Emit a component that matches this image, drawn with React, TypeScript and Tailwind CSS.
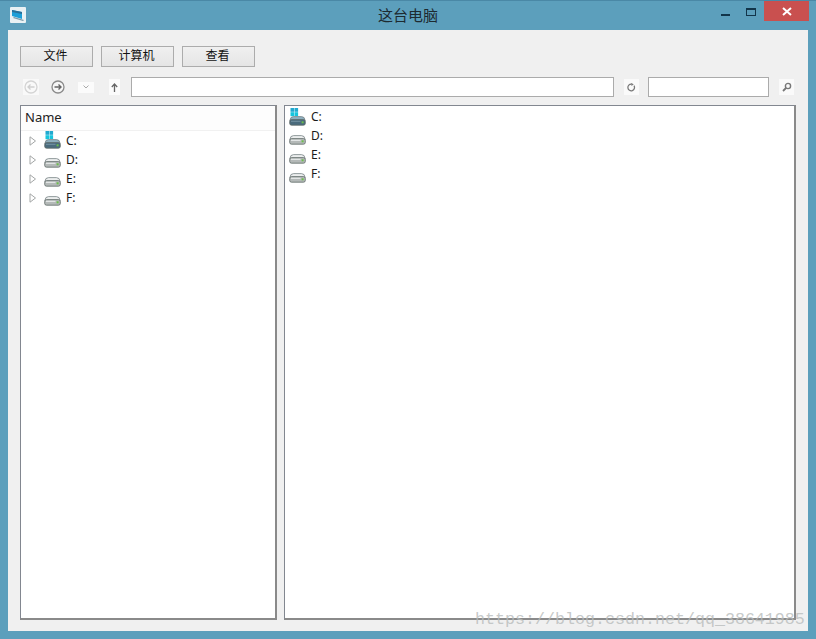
import React from "react";

function Drive({ system = false }: { system?: boolean }) {
  return (
    <svg width="17" height="18" viewBox="0 0 17 18" className="block shrink-0">
      {system && (
        <g>
          <rect x="1.5" y="0" width="3.6" height="3.8" fill="#21a9cf" />
          <rect x="5.5" y="0" width="3.6" height="3.8" fill="#21a9cf" />
          <rect x="1.5" y="4.2" width="3.6" height="4" fill="#16c5dd" />
          <rect x="5.5" y="4.2" width="3.6" height="4" fill="#16c5dd" />
        </g>
      )}
      <path d="M0.9 12.5 Q1.2 8.6 4.5 8.6 H12.5 Q15.8 8.6 16.1 12.5 Z" fill={system ? "#8fb0c0" : "#eceeee"} stroke="#7a8487" strokeWidth="0.8" />
      <rect x="0.7" y="11.6" width="15.6" height="5.6" rx="1.8" fill={system ? "#4a6b7d" : "#b4b9b8"} stroke="#5f6a67" strokeWidth="0.8" />
      <rect x="2" y="12.8" width="9.5" height="1" fill={system ? "#7593a3" : "#eef0f0"} />
      <rect x="12.6" y="13.3" width="2" height="2" fill="#6bbf4b" />
    </svg>
  );
}

function Arrow() {
  return (
    <svg width="8" height="10" viewBox="0 0 8 10" className="block shrink-0">
      <path d="M1 0.8 L6.5 5 L1 9.2 Z" fill="#fff" stroke="#a3a6a6" strokeWidth="1" />
    </svg>
  );
}

const Row = ({ label, system }: { label: string; system?: boolean }) => (
  <div className="flex h-[19px] items-center pl-[8px]">
    <Arrow />
    <div className="ml-[7px] w-[22px] -mt-[1px]"><Drive system={system} /></div>
    <span className="text-[12px] text-[#1a1a1a]">{label}</span>
  </div>
);

const ListRow = ({ label, system }: { label: string; system?: boolean }) => (
  <div className="flex h-[19px] items-center pl-[4px]">
    <div className="w-[22px]"><Drive system={system} /></div>
    <span className="text-[12px] text-[#1a1a1a]">{label}</span>
  </div>
);

const Btn = ({ label }: { label: string }) => (
  <button className="w-[73px] h-[21px] border border-[#acacac] bg-gradient-to-b from-[#f0f0f0] to-[#e5e5e5] text-[12px] leading-[18px] text-[#111] flex items-start justify-center pr-[2px]">
    {label}
  </button>
);

export default function App() {
  return (
    <div
      className="relative w-[816px] h-[639px] overflow-hidden bg-[#5c9fbc] flex flex-col border-t border-[#4a88a6]"
      style={{ fontFamily: '"Noto Sans", "Noto Sans CJK SC", sans-serif' }}
    >
      <div className="relative h-[29px] shrink-0 flex items-center justify-between pl-[10px] pr-[7px]">
        <svg width="16" height="16" viewBox="0 0 16 16" className="block -mt-[1px]">
          <rect width="16" height="16" rx="1" fill="#e9f1f4" />
          <path d="M2 3 L12 5 V12 L2 9 Z" fill="#1d9fd8" />
          <path d="M2 3 L12 5 V7 L2 5 Z" fill="#2a6f97" />
          <path d="M3 11 L13 14 L14 13 L4 10 Z" fill="#7b9aa8" />
        </svg>
        <span className="absolute left-[378px] top-[4px] text-[15px] leading-[20px] text-[#1d2a30]">这台电脑</span>
        <div className="flex items-start self-start">
          <div className="w-[9px] h-[2px] bg-[#12354a] mt-[13px] mr-[16px]" />
          <div className="w-[10px] h-[8px] border border-[#12354a] border-t-[2px] mt-[7px] mr-[8px]" />
          <div className="w-[45px] h-[20px] bg-[#c9504f] flex items-center justify-center">
            <svg width="10" height="9" viewBox="0 0 10 9"><path d="M1 1 L9 8 M9 1 L1 8" stroke="#fff" strokeWidth="2" /></svg>
          </div>
        </div>
      </div>

      <div className="flex flex-col w-[800px] h-[601px] ml-[8px] bg-[#f0f0f0] px-[12px] pt-[16px]">
        <div className="flex gap-[8px] h-[21px]">
          <Btn label="文件" />
          <Btn label="计算机" />
          <Btn label="查看" />
        </div>

        <div className="flex items-center h-[20px] mt-[10px]">
          <div className="w-[16px] h-[16px] ml-[3px] bg-[#f9f9f9] flex items-center justify-center">
            <svg width="14" height="14" viewBox="0 0 14 14"><circle cx="7" cy="7" r="6" fill="none" stroke="#d4d4d4" strokeWidth="1.3" /><path d="M10.5 7 H4 M6.5 4.5 L4 7 L6.5 9.5" fill="none" stroke="#cfcfcf" strokeWidth="1.3" /></svg>
          </div>
          <div className="ml-[12px]">
            <svg width="14" height="14" viewBox="0 0 14 14" className="block"><circle cx="7" cy="7" r="6" fill="#f6f6f6" stroke="#8a8a8a" strokeWidth="1.3" /><path d="M3.5 7 H10 M7.5 4.5 L10 7 L7.5 9.5" fill="none" stroke="#666" strokeWidth="1.4" /></svg>
          </div>
          <div className="ml-[13px] w-[16px] h-[11px] bg-[#fbfbfb] flex items-center justify-center">
            <svg width="6" height="4" viewBox="0 0 6 4"><path d="M0.5 0.5 L3 3 L5.5 0.5" fill="none" stroke="#aaa" strokeWidth="1" /></svg>
          </div>
          <div className="ml-[15px] w-[11px] h-[16px] bg-[#fbfbfb] flex items-center justify-center">
            <svg width="7" height="9" viewBox="0 0 7 9"><path d="M3.5 9 V1.5 M0.8 4 L3.5 1 L6.2 4" fill="none" stroke="#666" strokeWidth="1.3" /></svg>
          </div>
          <div className="ml-[11px] w-[483px] h-[20px] bg-white border border-[#ababab]" />
          <div className="ml-[10px] w-[15px] h-[16px] bg-[#fafafa] flex items-center justify-center">
            <svg width="9" height="9" viewBox="0 0 10 10"><path d="M7.8 3 A3.7 3.7 0 1 1 5 1.3" fill="none" stroke="#777" strokeWidth="1.4" /><path d="M4.5 0 L7.5 1.4 L5 3.2 Z" fill="#777" /></svg>
          </div>
          <div className="ml-[9px] w-[121px] h-[20px] bg-white border border-[#ababab]" />
          <div className="ml-[10px] w-[15px] h-[16px] bg-[#fafafa] flex items-center justify-center">
            <svg width="10" height="10" viewBox="0 0 10 10"><circle cx="6" cy="4" r="2.6" fill="none" stroke="#777" strokeWidth="1.4" /><path d="M4 6 L1 9" stroke="#777" strokeWidth="1.8" /></svg>
          </div>
        </div>

        <div className="flex gap-[7px] mt-[8px]">
          <div className="w-[257px] h-[515px] bg-white border border-[#828790] border-r-2 border-b-2 border-r-[#8a8a8a] border-b-[#8a8a8a] shrink-0">
            <div className="h-[25px] flex items-center pl-[4px] text-[13px] text-[#222] bg-[#fdfdfd] border-b border-[#f1f1f1]">Name</div>
            <div>
              <Row label="C:" system />
              <Row label="D:" />
              <Row label="E:" />
              <Row label="F:" />
            </div>
          </div>
          <div className="w-[514px] h-[515px] bg-white border border-[#828790] border-r-2 border-b-2 border-r-[#8a8a8a] border-b-[#8a8a8a] pt-[1px]">
            <ListRow label="C:" system />
            <ListRow label="D:" />
            <ListRow label="E:" />
            <ListRow label="F:" />
          </div>
        </div>
      </div>

      <div
        className="absolute left-[475px] top-[609px] text-[16.67px] leading-[20px] text-[#b8bcbc]/80 whitespace-nowrap"
        style={{ fontFamily: '"Liberation Mono", monospace' }}
      >
        https://blog.csdn.net/qq_38641985
      </div>
    </div>
  );
}
